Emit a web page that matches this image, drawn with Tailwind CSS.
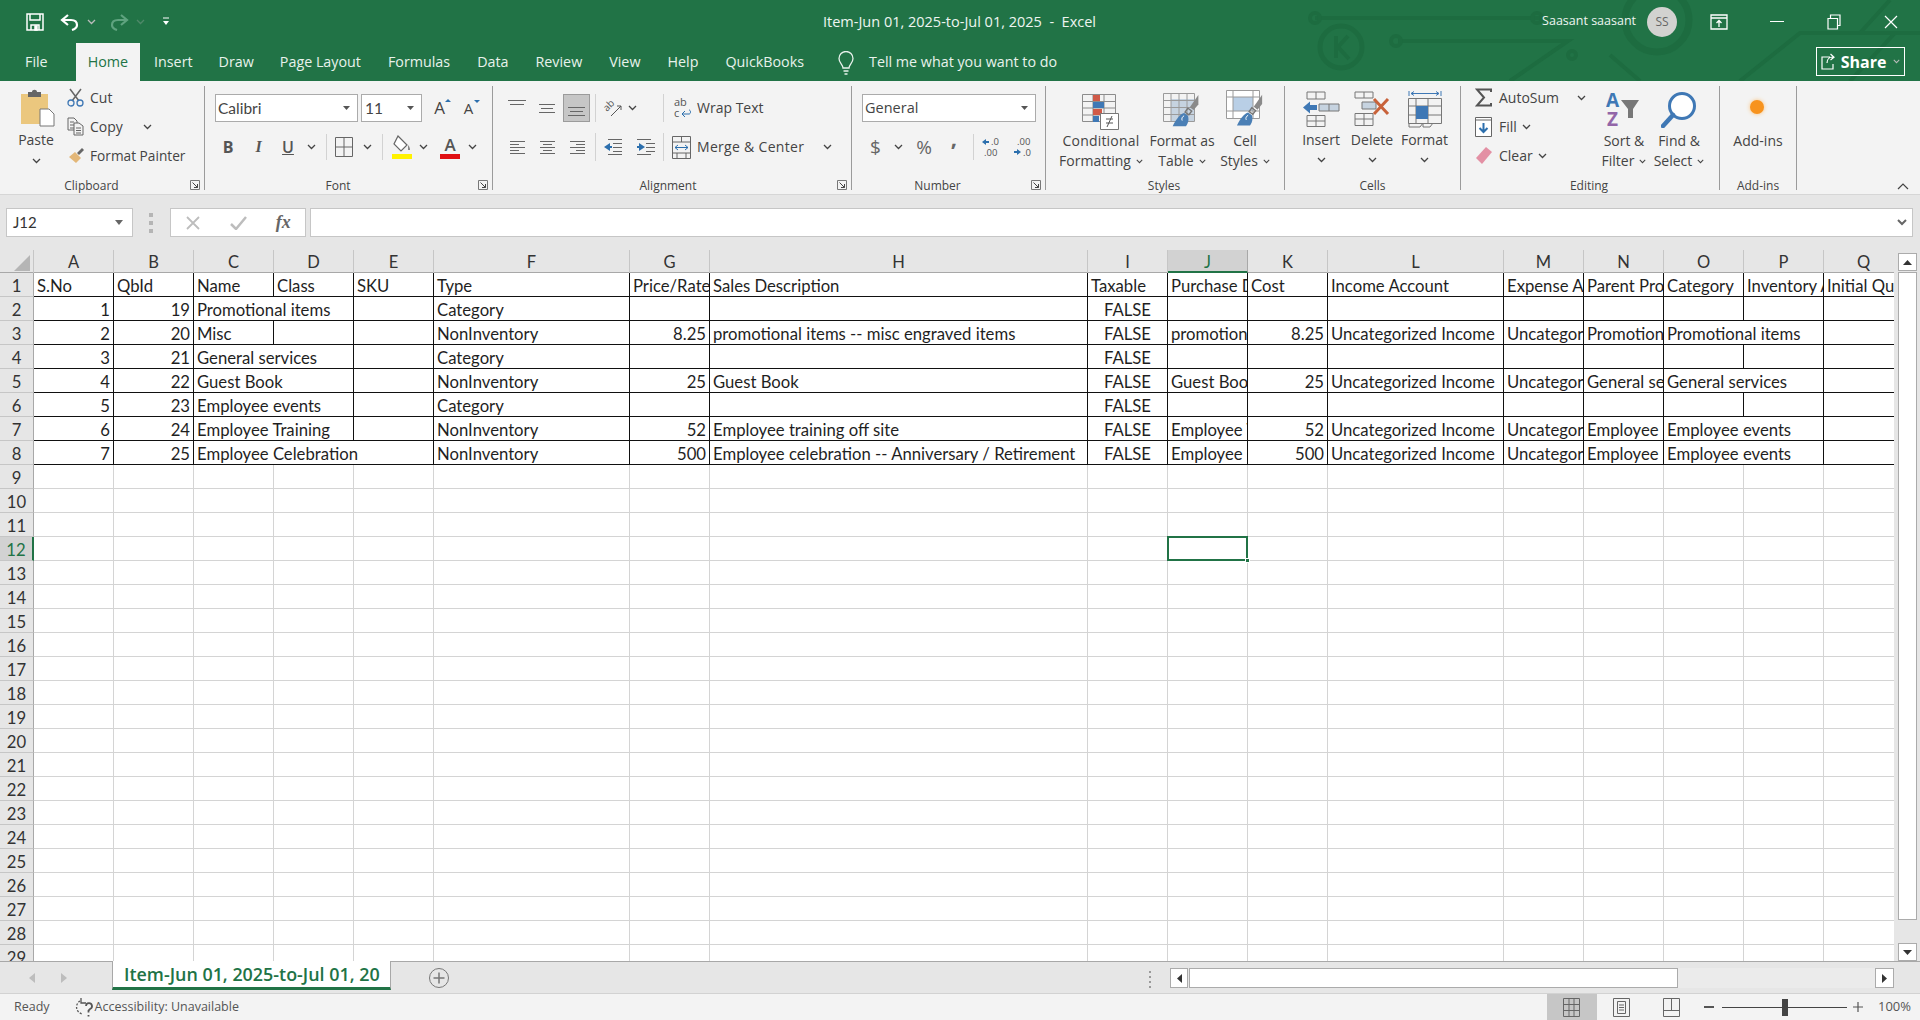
<!DOCTYPE html>
<html lang="en">
<head>
<meta charset="UTF-8">
<title>Item-Jun 01, 2025-to-Jul 01, 2025 - Excel</title>
<script src="https://cdn.jsdelivr.net/npm/@tailwindcss/browser@4"></script>
</head>
<body class="w-[1920px] h-[1020px] overflow-hidden flex flex-col bg-[#e6e6e6] text-[#444] font-[family-name:'Open_Sans',sans-serif]">

<svg class="hidden">
  <defs>
    <symbol id="chev" viewBox="0 0 9 6"><path d="M1 1l3.5 3.5L8 1" fill="none" stroke="#444" stroke-width="1.3"/></symbol>
    <symbol id="launch" viewBox="0 0 10 10"><path d="M.5 9.500V.5h9v9z" fill="none" stroke="#777"/><path d="M2.500 2.500l5 5M4 7.500h3.500V4" fill="none" stroke="#444"/></symbol>
    <symbol id="brush" viewBox="0 0 30 40"><path d="M28 2l-9 13 4 3 5-6z" fill="#8a8a8a"/><path d="M17 16l-3 4 4 3 3-4z" fill="none" stroke="#777" stroke-width="1.500"/><path d="M13 21c-4 1-9 7-12 14h14c3-4 3-8 2-11z" fill="#4a7fb5"/><path d="M13 24c-2 1-3 3-2 5" fill="none" stroke="#fff"/></symbol>
  </defs>
</svg>

<!-- title bar + tabs -->
<header class="relative h-[81px] shrink-0 bg-[#217346] text-white">
  <svg class="absolute right-0 top-0 w-[630px] h-[81px]" viewBox="0 0 630 81" fill="none" stroke="#1d6c40" stroke-width="4">
    <path d="M25 18h225"/><circle cx="25" cy="18" r="5"/><circle cx="247" cy="18" r="5"/>
    <circle cx="51" cy="47" r="21" stroke-width="5"/><path d="M46 36v22M58 36l-10 11 11 12" stroke-width="4"/>
    <path d="M108 41h170l-58 40"/><circle cx="106" cy="41" r="5"/><circle cx="282" cy="55" r="4"/>
    <circle cx="367" cy="20" r="32" stroke-width="7"/><path d="M350 81l-30-26"/>
    <path d="M450 81l60-48h120M560 81l45-48M600 0l-30 33"/>
  </svg>
  <div class="relative flex items-center h-[43px]">
    <svg class="ml-[26px] w-[18px] h-[18px]" viewBox="0 0 18 18" fill="none" stroke="#fff" stroke-width="1.500"><path d="M1 1h16v16H1z"/><path d="M4 1v6h10V1M5 17v-5h8v5"/><path d="M9 13h2v4H9z" fill="#fff"/></svg>
    <svg class="ml-[16px] w-[20px] h-[18px]" viewBox="0 0 20 18" fill="none" stroke="#fff" stroke-width="2.200"><path d="M8 2L2 7l6 5"/><path d="M2 7h9c4 0 6 2 6 5s-2 4-5 5"/></svg>
    <svg class="ml-[7px] w-[9px] h-[6px]"><use href="#chev" class="invert"/></svg>
    <svg class="ml-[13px] w-[20px] h-[18px]" viewBox="0 0 20 18" fill="none" stroke="#5fa37f" stroke-width="2.200"><path d="M12 2l6 5-6 5"/><path d="M18 7H9c-4 0-6 2-6 5s2 4 5 5"/></svg>
    <svg class="ml-[7px] w-[9px] h-[6px] opacity-30"><use href="#chev" class="invert"/></svg>
    <svg class="ml-[17px] w-[8px] h-[9px]" viewBox="0 0 8 9"><path d="M1 1h6" stroke="#fff" fill="none"/><path d="M1 4h6L4 8z" fill="#fff"/></svg>
    <p class="absolute left-[823px] top-[12px] text-[14.500px] leading-[20px] whitespace-pre text-[#eef5f1]">Item-Jun 01, 2025-to-Jul 01, 2025  -  Excel</p>
    <span class="ml-auto text-[12.500px] text-[#eef5f1]">Saasant saasant</span>
    <span class="ml-[11px] w-[30px] h-[30px] rounded-full bg-[#d2d2d0] text-[#666] text-[12px] flex items-center justify-center">SS</span>
    <svg class="ml-[33px] w-[18px] h-[16px]" viewBox="0 0 18 16" fill="none" stroke="#fff" stroke-width="1.300"><path d="M1 1h16v14H1zM1 4h16M9 13V7M6.500 9L9 6.500 11.500 9"/></svg>
    <span class="ml-[42px] w-[14px] h-px bg-white"></span>
    <svg class="ml-[43px] w-[14px] h-[16px]" viewBox="0 0 14 16" fill="none" stroke="#fff" stroke-width="1.200"><path d="M1 4.500h9.500V15H1zM3.500 4.500V1H13v10.500h-2.500"/></svg>
    <svg class="ml-[43px] mr-[22px] w-[14px] h-[14px]" viewBox="0 0 14 14" fill="none" stroke="#fff" stroke-width="1.200"><path d="M1 1l12 12M13 1L1 13"/></svg>
  </div>
  <nav class="relative flex items-start h-[38px] text-[14.300px] text-[#e8f2ec] leading-[38px]">
    <a class="ml-[25px] mr-[28px]">File</a>
    <a class="px-[12px] bg-[#f3f3f3] text-[#217346] h-[40px]">Home</a>
    <a class="px-[14px]">Insert</a>
    <a class="px-[12px]">Draw</a>
    <a class="px-[14px]">Page Layout</a>
    <a class="px-[13px]">Formulas</a>
    <a class="px-[14px]">Data</a>
    <a class="px-[13px]">Review</a>
    <a class="px-[14px]">View</a>
    <a class="px-[13px]">Help</a>
    <a class="px-[14px]">QuickBooks</a>
    <svg class="ml-[20px] mt-[8px] w-[16px] h-[24px]" viewBox="0 0 16 24" fill="none" stroke="#e8f2ec" stroke-width="1.300"><path d="M5 17c0-3-4-5-4-9.500a7 7 0 0 1 14 0C15 12 11 14 11 17z"/><path d="M5.500 20h5M6.500 23h3"/></svg>
    <span class="ml-[15px]">Tell me what you want to do</span>
    <a class="absolute left-[1816px] top-[4px] w-[89px] h-[29px] border border-white flex items-center justify-center gap-[5px] leading-none">
      <svg class="w-[15px] h-[17px]" viewBox="0 0 15 17" fill="none" stroke="#fff" stroke-width="1.200"><path d="M9 4H1v12h11v-5M6 10c0-4 3-6 6-6M9.500 1L13 4.200 9.500 7"/></svg>
      <b class="text-[16px] font-bold text-white">Share</b>
      <svg class="w-[7px] h-[5px] ml-[2px]"><use href="#chev" class="invert"/></svg>
    </a>
  </nav>
</header>

<!-- ribbon -->
<section class="relative h-[114px] shrink-0 bg-[#f3f3f3] border-b border-[#d6d6d6] pt-[5px] flex text-[14px] leading-[20px] text-[#444]">

  <!-- clipboard -->
  <div class="relative w-[205px] h-[104px] border-r border-[#9b9b9b] flex flex-col">
    <div class="flex">
      <div class="w-[72px] flex flex-col items-center">
        <svg class="mt-[3px] ml-[4px] w-[36px] h-[38px]" viewBox="0 0 36 38"><path d="M1 5h27v30H1z" fill="#ebc77e"/><path d="M8 3h4c0-3 5-3 5 0h4v5H8z" fill="#666"/><path d="M20 20h9l5 5v12H20z" fill="#fff" stroke="#777"/></svg>
        <span class="mt-[3px]">Paste</span>
        <svg class="mt-[8px] w-[9px] h-[6px]"><use href="#chev"/></svg>
      </div>
      <div class="-mt-[3px] flex flex-col">
        <div class="flex items-center h-[29px]">
          <svg class="-ml-[5px] w-[17px] h-[19px]" viewBox="0 0 17 19" fill="none"><path d="M3 1l9 12M14 1L5 13" stroke="#666" stroke-width="1.500"/><circle cx="4" cy="15" r="3" stroke="#3f78b5" stroke-width="1.300"/><circle cx="13" cy="15" r="3" stroke="#3f78b5" stroke-width="1.300"/></svg>
          <span class="ml-[6px]">Cut</span>
        </div>
        <div class="flex items-center h-[29px]">
          <svg class="-ml-[5px] w-[17px] h-[19px]" viewBox="0 0 17 19" fill="none" stroke="#666"><path d="M1 1h6l3 3v9H1zM3 5h4M3 8h4M3 11h4"/><path d="M7 6h5l4 3v9H7zM9 11h5M9 13.500h5M9 16h5" fill="#f3f3f3"/></svg>
          <span class="ml-[6px]">Copy</span>
          <svg class="ml-[20px] w-[9px] h-[6px]"><use href="#chev"/></svg>
        </div>
        <div class="flex items-center h-[29px]">
          <svg class="-ml-[4px] w-[17px] h-[17px]" viewBox="0 0 17 17"><path d="M1 10l6-5 6 6-5 5z" fill="#e3b778"/><path d="M9 6l5-5 2 2-5 5z" fill="#666"/></svg>
          <span class="ml-[5px] whitespace-nowrap text-[13.700px]">Format Painter</span>
        </div>
      </div>
    </div>
    <span class="mt-auto -mb-[4px] leading-[16px] text-[12px] text-center pr-[21px]">Clipboard</span>
    <svg class="absolute right-[4px] bottom-0 w-[10px] h-[10px]"><use href="#launch"/></svg>
  </div>

  <!-- font -->
  <div class="relative w-[288px] h-[104px] border-r border-[#9b9b9b] flex flex-col">
    <div class="flex items-center mt-[8px] pl-[10px] h-[28px]">
      <div class="w-[143px] h-[28px] bg-white border border-[#ababab] flex items-center justify-between pl-[2px] pr-[7px]"><span class="font-[family-name:Lato,sans-serif] text-[15.500px]">Calibri</span><svg class="w-[7px] h-[4px]" viewBox="0 0 7 4"><path d="M0 0h7L3.500 4z" fill="#555"/></svg></div>
      <div class="ml-[3px] w-[61px] h-[28px] bg-white border border-[#ababab] flex items-center justify-between pl-[3px] pr-[7px]"><span class="font-[family-name:Lato,sans-serif] text-[15.500px]">11</span><svg class="w-[7px] h-[4px]" viewBox="0 0 7 4"><path d="M0 0h7L3.500 4z" fill="#555"/></svg></div>
      <div class="ml-[3px] w-[29px] flex justify-center relative text-[17px]">A<svg class="absolute right-[3px] top-[1px] w-[6px] h-[3px]" viewBox="0 0 6 3"><path d="M0 3h6L3 0z" fill="#2c6fad"/></svg></div>
      <div class="w-[29px] flex justify-center relative text-[15px]">A<svg class="absolute right-[3px] top-[2px] w-[6px] h-[3px]" viewBox="0 0 6 3"><path d="M0 0h6L3 3z" fill="#2c6fad"/></svg></div>
    </div>
    <div class="flex items-center mt-[11px] pl-[8px] h-[28px]">
      <b class="w-[30px] text-center text-[16px] text-[#555] font-bold">B</b>
      <i class="w-[31px] text-center text-[16px] text-[#555] font-semibold font-[family-name:'Liberation_Serif',serif]">I</i>
      <u class="w-[28px] text-center text-[16px] text-[#555] font-semibold">U</u>
      <span class="w-[18px] flex justify-center"><svg class="w-[9px] h-[6px]"><use href="#chev"/></svg></span>
      <span class="ml-[6px] w-px h-[26px] bg-[#d2d2d2]"></span>
      <span class="w-[34px] flex justify-center"><svg class="w-[18px] h-[20px]" viewBox="0 0 18 20" fill="none" stroke="#666"><path d="M.5.5h17v19H.5zM9 .5v19M.5 10h17"/></svg></span>
      <span class="w-[12px] flex justify-center"><svg class="w-[9px] h-[6px]"><use href="#chev"/></svg></span>
      <span class="ml-[9px] w-px h-[26px] bg-[#d2d2d2]"></span>
      <span class="w-[36px] flex justify-center"><svg class="w-[21px] h-[24px]" viewBox="0 0 21 24"><path d="M7 1l9 9-6 6-7-7z" fill="#fff" stroke="#666" stroke-width="1.200"/><path d="M17 10c2 2 2 4 2 5h-2z" fill="#888"/><path d="M1 19h20v5H1z" fill="#fff200"/></svg></span>
      <span class="w-[8px] flex justify-center"><svg class="w-[9px] h-[6px] shrink-0"><use href="#chev"/></svg></span>
      <span class="ml-[7px] w-[32px] flex flex-col items-center"><b class="text-[17px] leading-[18px] text-[#555] font-semibold">A</b><span class="w-[20px] h-[5px] bg-[#e00f13]"></span></span>
      <span class="w-[12px] flex justify-center"><svg class="w-[9px] h-[6px]"><use href="#chev"/></svg></span>
    </div>
    <span class="mt-auto -mb-[4px] leading-[16px] text-[12px] text-center pr-[21px]">Font</span>
    <svg class="absolute right-[4px] bottom-0 w-[10px] h-[10px]"><use href="#launch"/></svg>
  </div>

  <!-- alignment -->
  <div class="relative w-[359px] h-[104px] border-r border-[#9b9b9b] flex flex-col">
    <div class="flex items-center mt-[8px] pl-[9px] h-[28px]">
      <span class="w-[30px] flex justify-center"><svg class="w-[18px] h-[22px]" viewBox="0 0 18 22" stroke="#666"><path d="M0 3.500h18M2 7.500h14"/></svg></span>
      <span class="w-[30px] flex justify-center"><svg class="w-[16px] h-[22px]" viewBox="0 0 16 22" stroke="#666"><path d="M0 7.500h16M2 11.500h12M0 15.500h16"/></svg></span>
      <span class="ml-[1px] w-[27px] h-[28px] bg-[#c6c6c6] border border-[#9b9b9b] flex justify-center items-end pb-[3px]"><svg class="w-[17px] h-[14px]" viewBox="0 0 17 14" stroke="#666"><path d="M0 3.500h17M2 7.500h13M0 11.500h17"/></svg></span>
      <span class="ml-[5px] w-px h-[28px] bg-[#d2d2d2]"></span>
      <span class="ml-[2px] w-[30px] flex justify-center"><svg class="w-[20px] h-[20px]" viewBox="0 0 20 20" fill="none" stroke="#555"><text x="1" y="11" transform="rotate(-45 6 9)" font-size="10" fill="#555" stroke="none" font-family="Open Sans">ab</text><path d="M8 18L18 8M14 8h4v4"/></svg></span>
      <span class="w-[8px] flex justify-center"><svg class="w-[9px] h-[6px] shrink-0"><use href="#chev"/></svg></span>
      <span class="ml-[27px] w-px h-[28px] bg-[#d2d2d2]"></span>
      <svg class="ml-[7px] w-[24px] h-[22px]" viewBox="0 0 24 22"><text x="3" y="9" font-size="11" fill="#555" font-family="Open Sans">ab</text><text x="3" y="20" font-size="11" fill="#555" font-family="Open Sans">c</text><path d="M11 17h7c2 0 2-4 0-4M11 17l3-3M11 17l3 3" fill="none" stroke="#2c6fad"/></svg>
      <span class="ml-[2px]">Wrap Text</span>
    </div>
    <div class="flex items-center mt-[11px] pl-[9px] h-[28px]">
      <span class="w-[30px] flex justify-center"><svg class="w-[15px] h-[14px]" viewBox="0 0 15 14" stroke="#666"><path d="M0 1.500h15M0 4.500h9M0 7.500h15M0 10.500h9M0 13.500h15"/></svg></span>
      <span class="w-[30px] flex justify-center"><svg class="w-[15px] h-[14px]" viewBox="0 0 15 14" stroke="#666"><path d="M0 1.500h15M3 4.500h9M0 7.500h15M3 10.500h9M0 13.500h15"/></svg></span>
      <span class="w-[30px] flex justify-center"><svg class="w-[15px] h-[14px]" viewBox="0 0 15 14" stroke="#666"><path d="M0 1.500h15M6 4.500h9M0 7.500h15M6 10.500h9M0 13.500h15"/></svg></span>
      <span class="ml-[3px] w-px h-[28px] bg-[#d2d2d2]"></span>
      <span class="w-[34px] flex justify-center"><svg class="w-[18px] h-[18px]" viewBox="0 0 18 18"><path d="M0 9l6-4v3h2v2H6v3z" fill="#2c6fad"/><path d="M4 1.500h14M9 5.500h9M9 9.500h9M9 13.500h9M4 16.500h14" stroke="#666"/></svg></span>
      <span class="w-[32px] flex justify-center"><svg class="w-[18px] h-[18px]" viewBox="0 0 18 18"><path d="M8 9L2 5v3H0v2h2v3z" fill="#2c6fad"/><path d="M0 1.500h14M9 5.500h9M9 9.500h9M9 13.500h9M0 16.500h14" stroke="#666"/></svg></span>
      <span class="ml-[1px] w-px h-[28px] bg-[#d2d2d2]"></span>
      <svg class="ml-[8px] w-[19px] h-[23px]" viewBox="0 0 19 23" fill="none" stroke="#666"><path d="M.5.500h18v22H.5zM.5 6h18M.5 17h18M9.500.500V6M5 17v5.500M14 17v5.500"/><path d="M3 11.500h13M3 11.500l3-2.500M3 11.500l3 2.500M16 11.500l-3-2.500M16 11.500l-3 2.500" stroke="#2c6fad"/></svg>
      <span class="ml-[6px] w-[123px] whitespace-nowrap tracking-[0.3px]">Merge &amp; Center</span>
      <span class="w-[14px] flex justify-center"><svg class="w-[9px] h-[6px]"><use href="#chev"/></svg></span>
    </div>
    <span class="mt-auto -mb-[4px] leading-[16px] text-[12px] text-center pr-[8px]">Alignment</span>
    <svg class="absolute right-[4px] bottom-0 w-[10px] h-[10px]"><use href="#launch"/></svg>
  </div>

  <!-- number -->
  <div class="relative w-[194px] h-[104px] border-r border-[#9b9b9b] flex flex-col">
    <div class="flex items-center mt-[8px] pl-[10px] h-[28px]">
      <div class="w-[174px] h-[28px] bg-white border border-[#ababab] flex items-center justify-between pl-[2px] pr-[7px]"><span class="text-[14.500px]">General</span><svg class="w-[7px] h-[4px]" viewBox="0 0 7 4"><path d="M0 0h7L3.500 4z" fill="#555"/></svg></div>
    </div>
    <div class="flex items-center mt-[11px] pl-[10px] h-[28px]">
      <span class="w-[27px] text-center text-[19px] text-[#666]">$</span>
      <span class="w-[18px] flex justify-center"><svg class="w-[9px] h-[6px]"><use href="#chev"/></svg></span>
      <span class="w-[34px] text-center text-[19px] text-[#666]">%</span>
      <span class="w-[26px] text-center text-[22px] font-bold text-[#666] -mt-[20px]">,</span>
      <span class="ml-[6px] w-px h-[26px] bg-[#d2d2d2]"></span>
      <svg class="ml-[8px] w-[20px] h-[22px]" viewBox="0 0 20 22" font-family="Open Sans" font-size="9.500" fill="#555"><path d="M0 6l4-3v2h3v2H4v2z" fill="#2c6fad"/><text x="9" y="9">.0</text><text x="2" y="20">.00</text></svg>
      <svg class="ml-[12px] w-[20px] h-[22px]" viewBox="0 0 20 22" font-family="Open Sans" font-size="9.500" fill="#555"><text x="3" y="9">.00</text><path d="M7 16l-4-3v2H0v2h3v2z" fill="#2c6fad"/><text x="9" y="20">.0</text></svg>
    </div>
    <span class="mt-auto -mb-[4px] leading-[16px] text-[12px] text-center pr-[22px]">Number</span>
    <svg class="absolute right-[4px] bottom-0 w-[10px] h-[10px]"><use href="#launch"/></svg>
  </div>

  <!-- styles -->
  <div class="relative w-[239px] h-[104px] border-r border-[#9b9b9b] flex flex-col">
    <div class="flex pl-[10px]">
      <div class="w-[90px] flex flex-col items-center">
        <svg class="mt-[8px] w-[38px] h-[36px]" viewBox="0 0 38 36" fill="none" stroke="#8c8c8c"><path d="M.5.500h33v27H.5zM.5 7.500h33M.5 14h33M.5 21h33M11 .500v27M22 .500v27"/><path d="M11 1h7v6h-7z" fill="#d05a48" stroke="none"/><path d="M11 8h11v6H11z" fill="#3f78b5" stroke="none"/><path d="M11 15h9v6h-9z" fill="#d05a48" stroke="none"/><path d="M11 22h6v6h-6z" fill="#3f78b5" stroke="none"/><path d="M18.500 19.500h18v16h-18z" fill="#fff" stroke="#777"/><path d="M24 25h7M24 29h7M30 22l-5 11" stroke="#555"/></svg>
        <span class="mt-[1px] whitespace-nowrap tracking-[0.2px]">Conditional</span>
        <span class="whitespace-nowrap flex items-center">Formatting<svg class="ml-[5px] w-[7px] h-[5px]"><use href="#chev"/></svg></span>
      </div>
      <div class="w-[72px] flex flex-col items-center">
        <svg class="mt-[7px] w-[38px] h-[38px]" viewBox="0 0 38 38" fill="none"><path d="M8 6h24v22H8z" fill="#c6d3e0"/><path d="M.5 .500h31v28H.5zM.5 7.500h31M.5 14.500h31M.5 21.500h31M8 .500v28M16 .500v28M24 .500v28" stroke="#9a9a9a"/><use href="#brush" x="8" y="0" width="30" height="38"/></svg>
        <span class="mt-0 whitespace-nowrap">Format as</span>
        <span class="whitespace-nowrap flex items-center">Table<svg class="ml-[5px] w-[7px] h-[5px]"><use href="#chev"/></svg></span>
      </div>
      <div class="w-[54px] flex flex-col items-center">
        <svg class="mt-[4px] w-[38px] h-[41px]" viewBox="0 0 38 41" fill="none"><path d="M.5.500h33v28H.5z" fill="#fff" stroke="#9a9a9a"/><path d="M7 7h20v14H7z" fill="#b9cfe6"/><path d="M.5 7h33M.5 21h33M7 .500v28M27 .500v28" stroke="#9a9a9a"/><use href="#brush" x="10" y="2" width="28" height="39"/></svg>
        <span class="whitespace-nowrap">Cell</span>
        <span class="whitespace-nowrap flex items-center">Styles<svg class="ml-[5px] w-[7px] h-[5px]"><use href="#chev"/></svg></span>
      </div>
    </div>
    <span class="mt-auto -mb-[4px] leading-[16px] text-[12px] text-center pr-[2px]">Styles</span>
  </div>

  <!-- cells -->
  <div class="relative w-[176px] h-[104px] border-r border-[#9b9b9b] flex flex-col">
    <div class="flex pl-[11px]">
      <div class="w-[50px] flex flex-col items-center">
        <svg class="mt-[5px] w-[37px] h-[36px]" viewBox="0 0 37 36" fill="none" stroke="#777"><path d="M4 1h18v7H4zM13 1v7M4 24.500h18v11H4zM13 24.500v11M4 30h18"/><path d="M16 13h20v7H16z" fill="#c6d3e0"/><path d="M26 13v7"/><path d="M0 16.500l7-6v3.500h7v5H7v3.500z" fill="#3f78b5" stroke="none"/></svg>
        <span class="mt-[3px]">Insert</span>
        <svg class="mt-[7px] w-[9px] h-[6px]"><use href="#chev"/></svg>
      </div>
      <div class="w-[52px] flex flex-col items-center">
        <svg class="mt-[5px] w-[37px] h-[36px]" viewBox="0 0 37 36" fill="none" stroke="#777"><path d="M1 1h18v6H1zM10 1v6M1 22.500h18v12H1zM10 22.500v12M1 28h18"/><path d="M8 11h14v7H8z" fill="#c6d3e0"/><path d="M20 8l14 15M34 8L20 23" stroke="#c8623a" stroke-width="3"/></svg>
        <span class="mt-[3px]">Delete</span>
        <svg class="mt-[7px] w-[9px] h-[6px]"><use href="#chev"/></svg>
      </div>
      <div class="w-[53px] flex flex-col items-center">
        <svg class="mt-[4px] w-[34px] h-[38px]" viewBox="0 0 34 38" fill="none" stroke="#777"><path d="M1 1v5M33 1v5" stroke="#3f78b5"/><path d="M3 3.500h28M3 3.500l3-2M3 3.500l3 2M31 3.500l-3-2M31 3.500l-3 2" stroke="#3f78b5"/><path d="M.5 8.500h33v25H.5zM.5 16h33M.5 25h33M8 8.500v25M20 8.500v25"/><path d="M8 16h12v13H8z" fill="#3f78b5" stroke="none"/><path d="M1 33v4h11l3-4M15 33v4h7l3-4"/></svg>
        <span class="mt-[2px]">Format</span>
        <svg class="mt-[7px] w-[9px] h-[6px]"><use href="#chev"/></svg>
      </div>
    </div>
    <span class="mt-auto -mb-[4px] leading-[16px] text-[12px] text-center">Cells</span>
  </div>

  <!-- editing -->
  <div class="relative w-[259px] h-[104px] border-r border-[#9b9b9b] flex flex-col">
    <div class="flex pl-[14px]">
      <div class="-mt-[3px] w-[121px] flex flex-col">
        <div class="flex items-center h-[29px]">
          <svg class="w-[17px] h-[19px]" viewBox="0 0 17 19" fill="none" stroke="#555" stroke-width="2"><path d="M16 4V1.500H2L9 9.500 2 17.500h14V15"/></svg>
          <span class="ml-[7px] w-[78px]">AutoSum</span>
          <svg class="w-[9px] h-[6px]"><use href="#chev"/></svg>
        </div>
        <div class="flex items-center h-[29px]">
          <svg class="w-[17px] h-[20px]" viewBox="0 0 17 20" fill="none"><path d="M.5.500h16v19H.5z" fill="#fff" stroke="#666"/><path d="M.5 3h16" stroke="#666"/><path d="M8.500 6v9M4.500 11l4 4 4-4" stroke="#2c6fad" stroke-width="2"/></svg>
          <span class="ml-[7px]">Fill</span>
          <svg class="ml-[5px] w-[9px] h-[6px]"><use href="#chev"/></svg>
        </div>
        <div class="flex items-center h-[29px]">
          <svg class="w-[17px] h-[19px]" viewBox="0 0 17 19"><path d="M1 12L11 1l6 5L7 18z" fill="#e390a4"/></svg>
          <span class="ml-[7px]">Clear</span>
          <svg class="ml-[5px] w-[9px] h-[6px]"><use href="#chev"/></svg>
        </div>
      </div>
      <div class="w-[56px] flex flex-col items-center">
        <svg class="mt-[6px] w-[36px] h-[36px]" viewBox="0 0 36 36" font-family="Open Sans" font-weight="700" font-size="19"><text x="0" y="15" fill="#3f78b5">A</text><text x="1" y="34" fill="#9266a8">Z</text><path d="M15 8h18l-6 9v9h-5v-9z" fill="#777"/></svg>
        <span class="mt-[3px]">Sort &amp;</span>
        <span class="whitespace-nowrap flex items-center">Filter<svg class="ml-[5px] w-[7px] h-[5px]"><use href="#chev"/></svg></span>
      </div>
      <div class="w-[54px] flex flex-col items-center">
        <svg class="mt-[5px] w-[36px] h-[37px]" viewBox="0 0 36 37" fill="none"><circle cx="21" cy="15" r="12.500" fill="#fff" stroke="#3f78b5" stroke-width="3"/><path d="M12 24L2 35" stroke="#3f78b5" stroke-width="4.500" stroke-linecap="round"/></svg>
        <span class="mt-[3px] whitespace-nowrap">Find &amp;</span>
        <span class="whitespace-nowrap flex items-center">Select<svg class="ml-[5px] w-[7px] h-[5px]"><use href="#chev"/></svg></span>
      </div>
    </div>
    <span class="mt-auto -mb-[4px] leading-[16px] text-[12px] text-center pr-[2px]">Editing</span>
  </div>

  <!-- add-ins -->
  <div class="relative w-[77px] h-[104px] border-r border-[#9b9b9b] flex flex-col items-center">
    <span class="mt-[14px] -ml-[2px] w-[14px] h-[14px] rounded-full bg-[#f7931e] shadow-[0_0_4px_#fbc27a]"></span>
    <span class="mt-[17px] whitespace-nowrap">Add-ins</span>
    <span class="mt-auto -mb-[4px] leading-[16px] text-[12px]">Add-ins</span>
  </div>

  <svg class="absolute right-[11px] bottom-[4px] w-[12px] h-[7px]" viewBox="0 0 12 7" fill="none" stroke="#444" stroke-width="1.200"><path d="M1 6l5-5 5 5"/></svg>
</section>

<!-- formula bar -->
<section class="h-[55px] shrink-0 flex items-start pt-[13px] bg-[#e6e6e6]">
  <div class="ml-[6px] w-[127px] h-[29px] bg-white border border-[#c6c6c6] flex items-center justify-between pl-[6px] pr-[9px] font-[family-name:Lato,sans-serif] text-[15px] text-[#333]">J12<svg class="w-[8px] h-[5px]" viewBox="0 0 8 5"><path d="M0 0h8L4 5z" fill="#666"/></svg></div>
  <div class="ml-[16px] w-[4px] h-[29px] flex flex-col gap-[4px] justify-center"><span class="w-[4px] h-[4px] bg-[#b5b5b5]"></span><span class="w-[4px] h-[4px] bg-[#b5b5b5]"></span><span class="w-[4px] h-[4px] bg-[#b5b5b5]"></span></div>
  <div class="ml-[17px] w-[136px] h-[29px] bg-white border border-[#c6c6c6] flex items-center">
    <span class="w-[45px] flex justify-center"><svg class="w-[14px] h-[14px]" viewBox="0 0 14 14" fill="none" stroke="#bdbdbd" stroke-width="1.800"><path d="M1 1l12 12M13 1L1 13"/></svg></span>
    <span class="w-[46px] flex justify-center"><svg class="w-[17px] h-[14px]" viewBox="0 0 17 14" fill="none" stroke="#bdbdbd" stroke-width="2.500"><path d="M1 8l5 5L16 1"/></svg></span>
    <i class="w-[44px] text-center font-[family-name:'Liberation_Serif',serif] text-[18px] font-bold text-[#666]">fx</i>
  </div>
  <div class="ml-[4px] w-[1603px] h-[29px] bg-white border border-[#c6c6c6] flex items-center justify-end pr-[5px]"><svg class="w-[10px] h-[7px]" viewBox="0 0 10 7" fill="none" stroke="#666" stroke-width="2"><path d="M1 1l4 4 4-4"/></svg></div>
</section>

<!-- sheet -->
<section class="h-[711px] shrink-0 flex">
  <div id="sheet" class="w-[1894px] overflow-hidden bg-white font-[family-name:Lato,sans-serif] text-[16.700px] text-[#1f1f1f]"></div>
  <div class="w-[26px] flex flex-col items-start pt-[3px] pl-[4px]">
    <div class="w-[19px] h-[18px] bg-white border border-[#ababab] flex items-center justify-center"><svg class="w-[9px] h-[5px]" viewBox="0 0 9 5"><path d="M0 5h9L4.500 0z" fill="#333"/></svg></div>
    <div class="mt-px w-[19px] h-[648px] bg-white border border-[#ababab]"></div>
    <div class="mt-auto w-[19px] h-[18px] bg-white border border-[#ababab] flex items-center justify-center"><svg class="w-[9px] h-[5px]" viewBox="0 0 9 5"><path d="M0 0h9L4.500 5z" fill="#333"/></svg></div>
  </div>
</section>

<!-- sheet tabs -->
<section class="h-[32px] shrink-0 flex items-start bg-[#e6e6e6] border-t border-[#a8a8a8]">
  <svg class="ml-[29px] mt-[11px] w-[6px] h-[10px]" viewBox="0 0 6 10"><path d="M6 0v10L0 5z" fill="#bdbdbd"/></svg>
  <svg class="ml-[26px] mt-[11px] w-[6px] h-[10px]" viewBox="0 0 6 10"><path d="M0 0v10l6-5z" fill="#bdbdbd"/></svg>
  <div class="ml-[45px] -mt-px w-[279px] h-[29px] bg-white border-x border-[#a8a8a8] border-b-[3px] border-b-[#217346] pl-[11px] text-[17.900px] leading-[26px] font-semibold text-[#217346] whitespace-nowrap overflow-hidden">Item-Jun 01, 2025-to-Jul 01, 20</div>
  <svg class="ml-[38px] mt-[6px] w-[20px] h-[20px]" viewBox="0 0 20 20" fill="none" stroke="#777"><circle cx="10" cy="10" r="9.500"/><path d="M10 4.500v11M4.500 10h11" stroke-width="1.500"/></svg>
  <div class="ml-[700px] mt-[9px] flex flex-col gap-[3px]"><span class="w-[2px] h-[2px] bg-[#999]"></span><span class="w-[2px] h-[2px] bg-[#999]"></span><span class="w-[2px] h-[2px] bg-[#999]"></span><span class="w-[2px] h-[2px] bg-[#999]"></span></div>
  <div class="ml-[19px] mt-[6px] flex h-[20px]">
    <div class="w-[18px] bg-white border border-[#ababab] flex items-center justify-center"><svg class="w-[5px] h-[9px]" viewBox="0 0 5 9"><path d="M5 0v9L0 4.500z" fill="#333"/></svg></div>
    <div class="ml-px w-[489px] bg-white border border-[#ababab]"></div>
    <div class="w-[197px] bg-[#ebebeb]"></div>
    <div class="w-[19px] bg-white border border-[#ababab] flex items-center justify-center"><svg class="w-[5px] h-[9px]" viewBox="0 0 5 9"><path d="M0 0v9l5-4.500z" fill="#333"/></svg></div>
  </div>
</section>

<!-- status bar -->
<footer class="h-[27px] shrink-0 flex items-center bg-[#f3f3f3] border-t border-[#d2d2d2] text-[12.500px] text-[#555]">
  <span class="ml-[14px]">Ready</span>
  <svg class="ml-[24px] w-[20px] h-[20px]" viewBox="0 0 20 20" fill="none" stroke="#555" stroke-width="1.300"><path d="M6 4a7 7 0 0 0 3 13" stroke-dasharray="2 1.500"/><path d="M7 1v5h5"/><path d="M12 9a3 3 0 1 1 4 3l-1.500 1.500v2M14.500 18v1.500" stroke-width="1.800"/></svg>
  <span class="ml-[1px]">Accessibility: Unavailable</span>
  <div class="ml-auto w-[50px] h-[26px] bg-[#c6c6c6] flex items-center justify-center"><svg class="w-[17px] h-[19px]" viewBox="0 0 17 19" fill="none" stroke="#666"><path d="M.5.500h16v18H.5zM.5 6.500h16M.5 12.500h16M6 .5v18M11 .5v18"/></svg></div>
  <div class="w-[50px] flex justify-center"><svg class="w-[17px] h-[19px]" viewBox="0 0 17 19" fill="none" stroke="#666"><path d="M.5.500h16v18H.5zM4.500 3.500h8v12h-8zM6 7h5M6 9.500h5M6 12h5"/></svg></div>
  <div class="w-[50px] flex justify-center"><svg class="w-[17px] h-[19px]" viewBox="0 0 17 19" fill="none" stroke="#666"><path d="M.5.500h16v18H.5zM.5 12.500h16M8.500.5v12"/></svg></div>
  <span class="ml-[7px] w-[10px] h-[1.500px] bg-[#555]"></span>
  <div class="ml-[8px] relative w-[125px] h-px bg-[#444]"><span class="absolute left-[60px] -top-[8px] w-[6px] h-[17px] bg-[#444]"></span></div>
  <svg class="ml-[6px] w-[10px] h-[10px]" viewBox="0 0 10 10" stroke="#555" stroke-width="1.200"><path d="M5 0v10M0 5h10"/></svg>
  <span class="ml-[15px] mr-[9px] text-[13px]">100%</span>
</footer>

<script>
  // column letters with their pixel widths come from the grid template below
  var letters = 'ABCDEFGHIJKLMNOPQ'.split('');
  var colsClass = 'grid grid-rows-[24px] grid-cols-[34px_80px_80px_80px_80px_80px_196px_80px_378px_80px_80px_80px_176px_80px_80px_80px_80px_80px]';
  var headClass = 'grid grid-rows-[23px] grid-cols-[34px_80px_80px_80px_80px_80px_196px_80px_378px_80px_80px_80px_176px_80px_80px_80px_80px_80px]';

  // [text, align, span]; align r = right, c = center
  var ui = 'Uncategorized Income', cat = 'Category', non = 'NonInventory', un = 'Uncategorized Account', f = ['FALSE', 'c'];
  var rows = [
    ['S.No','QbId','Name','Class','SKU','Type','Price/Rate','Sales Description','Taxable','Purchase Description','Cost','Income Account','Expense Account','Parent Product','Category','Inventory Account','Initial Quantity'],
    [['1','r'],['19','r'],['Promotional items','',2],'',cat,'','',f,'','','','','','','',''],
    [['2','r'],['20','r'],'Misc','','',non,['8.25','r'],'promotional items -- misc engraved items',f,'promotional items',['8.25','r'],ui,un,'Promotional items',['Promotional items','',2],''],
    [['3','r'],['21','r'],['General services','',2],'',cat,'','',f,'','','','','','','',''],
    [['4','r'],['22','r'],['Guest Book','',2],'',non,['25','r'],'Guest Book',f,'Guest Book',['25','r'],ui,un,'General services',['General services','',2],''],
    [['5','r'],['23','r'],['Employee events','',2],'',cat,'','',f,'','','','','','','',''],
    [['6','r'],['24','r'],['Employee Training','',2],'',non,['52','r'],'Employee training off site',f,'Employee Training',['52','r'],ui,un,'Employee events',['Employee events','',2],''],
    [['7','r'],['25','r'],['Employee Celebration','',3],non,['500','r'],'Employee celebration -- Anniversary / Retirement',f,'Employee Celebration',['500','r'],ui,un,'Employee events',['Employee events','',2],'']
  ];
  var spans = {2: 'col-span-2', 3: 'col-span-3'};
  var aligns = {r: 'text-right', c: 'text-center'};
  var html = '';

  // column headers
  html += '<div class="' + headClass + ' h-[23px] bg-[#e6e6e6] border-b border-[#a8a8a8] text-[#333] text-[16.500px] leading-[24px]">';
  html += '<div class="relative border-r border-[#c6c6c6]"><svg class="absolute right-[3px] bottom-[2px] w-[16px] h-[16px]" viewBox="0 0 16 16"><path d="M16 0v16H0z" fill="#b5b5b5"/></svg></div>';
  letters.forEach(function (l) {
    html += l === 'J'
      ? '<div class="text-center bg-[#d2d2d2] text-[#217346] border-r border-[#a8a8a8] border-b-2 border-b-[#217346]">' + l + '</div>'
      : '<div class="text-center border-r border-[#c6c6c6]">' + l + '</div>';
  });
  html += '</div>';

  // rows 1 to 29
  for (var n = 1; n <= 29; n++) {
    html += '<div class="' + colsClass + ' h-[24px]">';
    html += n === 12
      ? '<div class="overflow-hidden text-center bg-[#d2d2d2] text-[#217346] border-r-2 border-[#217346] border-b border-b-[#c6c6c6] leading-[27px]">' + n + '</div>'
      : '<div class="overflow-hidden text-center bg-[#e6e6e6] text-[#333] border-r border-[#a8a8a8] border-b border-b-[#c6c6c6] leading-[27px]">' + n + '</div>';
    var row = rows[n - 1];
    if (row) {
      row.forEach(function (c) {
        var cell = Array.isArray(c) ? c : [c, ''];
        html += '<div class="overflow-hidden whitespace-nowrap px-[3px] leading-[27px] border-r border-b border-[#111] ' + (spans[cell[2]] || '') + ' ' + (aligns[cell[1]] || '') + '">' + cell[0] + '</div>';
      });
    } else {
      letters.forEach(function (l) {
        html += n === 12 && l === 'J'
          ? '<div class="relative border-r border-b border-[#d4d4d4]"><span class="absolute -left-[1px] -top-[1px] w-[81px] h-[25px] border-2 border-[#217346]"></span><span class="absolute -right-[3px] -bottom-[3px] w-[5px] h-[5px] bg-[#217346] border border-white"></span></div>'
          : '<div class="border-r border-b border-[#d4d4d4]"></div>';
      });
    }
    html += '</div>';
  }
  document.getElementById('sheet').innerHTML = html;
</script>
</body>
</html>
